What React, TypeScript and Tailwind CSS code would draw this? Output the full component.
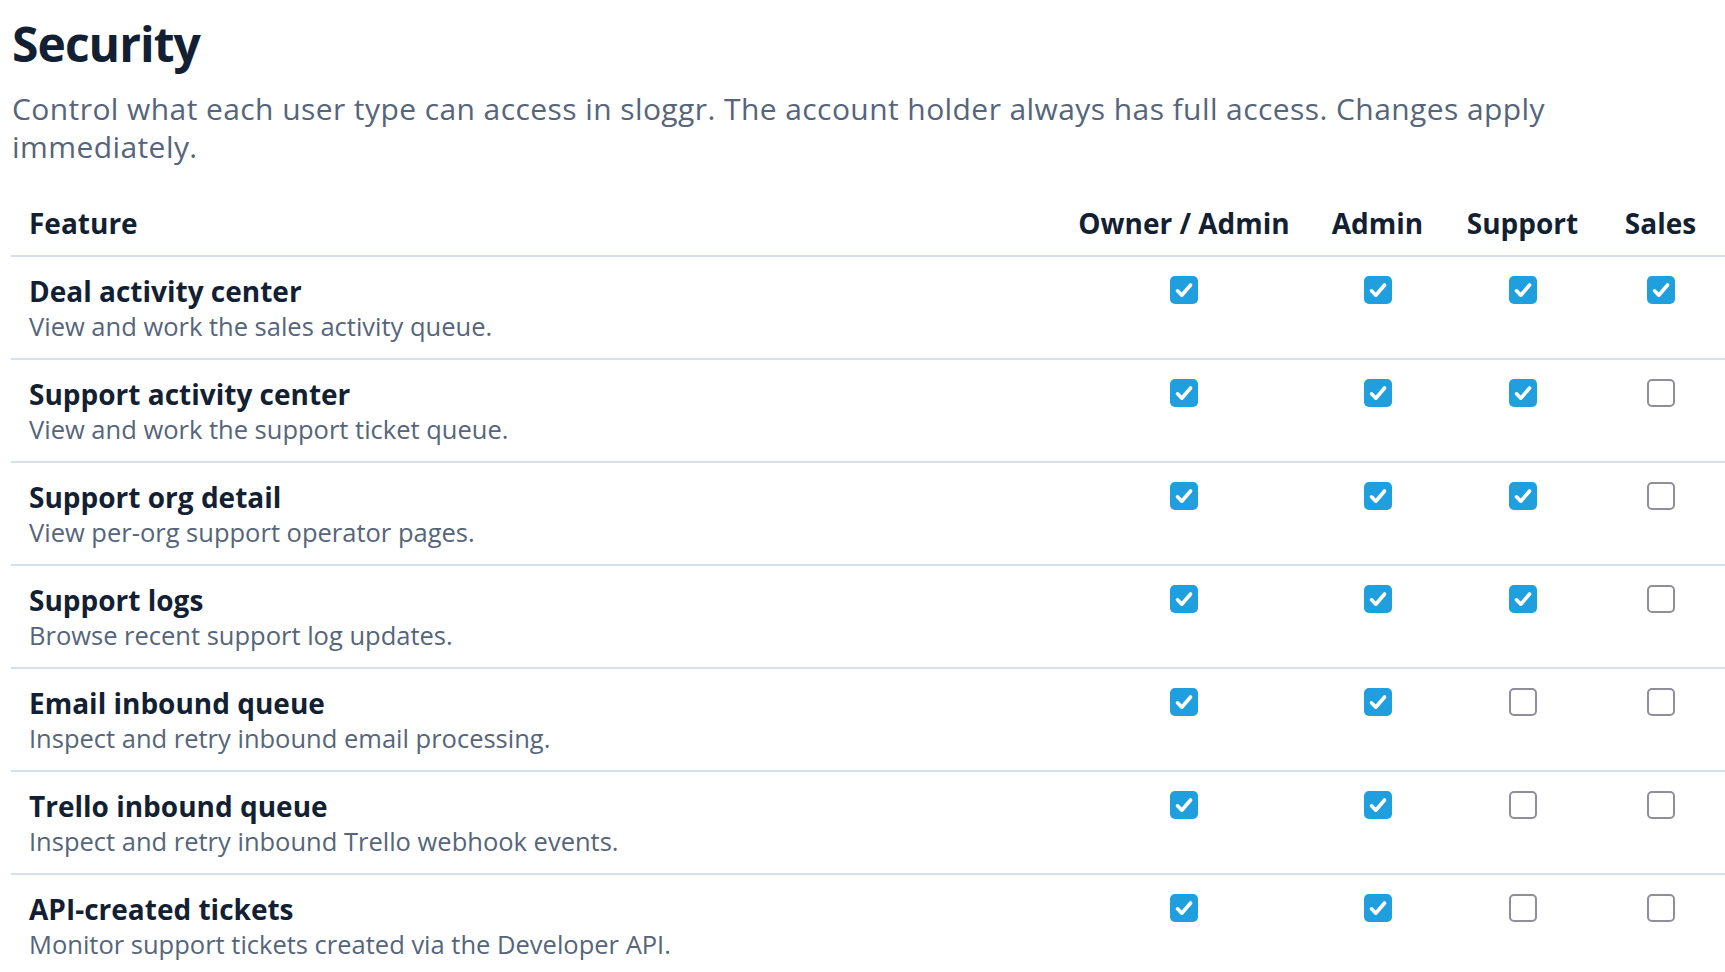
const ROLES = ['Owner / Admin', 'Admin', 'Support', 'Sales']

const FEATURES = [
  { name: 'Deal activity center', desc: 'View and work the sales activity queue.', access: [true, true, true, true] },
  { name: 'Support activity center', desc: 'View and work the support ticket queue.', access: [true, true, true, false] },
  { name: 'Support org detail', desc: 'View per-org support operator pages.', access: [true, true, true, false] },
  { name: 'Support logs', desc: 'Browse recent support log updates.', access: [true, true, true, false] },
  { name: 'Email inbound queue', desc: 'Inspect and retry inbound email processing.', access: [true, true, false, false] },
  { name: 'Trello inbound queue', desc: 'Inspect and retry inbound Trello webhook events.', access: [true, true, false, false] },
  { name: 'API-created tickets', desc: 'Monitor support tickets created via the Developer API.', access: [true, true, false, false] },
]

function Checkbox({ checked }: { checked: boolean }) {
  if (!checked) {
    return <span className="block h-[28px] w-[28px] rounded-[5px] border-2 border-[#8f8e9b] bg-white" />
  }
  return (
    <span className="flex h-[28px] w-[28px] items-center justify-center rounded-[5px] bg-[#209fdf]">
      <svg viewBox="0 0 28 28" className="h-[28px] w-[28px]" fill="none">
        <path d="M7.5 14.8l4.3 4.4L20.6 9" stroke="white" strokeWidth="3.6" strokeLinecap="round" strokeLinejoin="round" />
      </svg>
    </span>
  )
}

export default function App() {
  return (
    <div className="min-h-screen bg-white pl-[11px] pt-[14px] font-['Open_Sans',sans-serif] text-[#131f33]">
      <h1 className="pl-[1px] text-[48px] font-bold leading-[60px] tracking-[-0.02em]">Security</h1>
      <p className="mt-4 pl-[1px] text-[30px] leading-[38px] tracking-[0.014em] text-[#55657b]">
        Control what each user type can access in sloggr. The account holder always has full access. Changes apply
        <br />
        immediately.
      </p>

      <div className="mt-[36px]">
        <div className="grid grid-cols-[1fr_244px_143px_147px_129px] border-b-2 border-[#d6dfec] pt-[2px] pb-[13px] text-[28px] font-bold leading-[38px]">
          <div className="pl-[18px]">Feature</div>
          {ROLES.map((r) => (
            <div key={r} className="text-center">{r}</div>
          ))}
        </div>

        {FEATURES.map((f) => (
          <div
            key={f.name}
            className="grid grid-cols-[1fr_244px_143px_147px_129px] border-b-2 border-[#d6dfec] pt-[17px] pb-[14px] last:border-b-0"
          >
            <div className="pl-[18px]">
              <div className="text-[28px] font-bold leading-[34px]">{f.name}</div>
              <div className="text-[25.5px] leading-[36px] text-[#55657b]">{f.desc}</div>
            </div>
            {f.access.map((a, i) => (
              <div key={i} className="flex justify-center pt-[2px]">
                <Checkbox checked={a} />
              </div>
            ))}
          </div>
        ))}
      </div>
    </div>
  )
}
